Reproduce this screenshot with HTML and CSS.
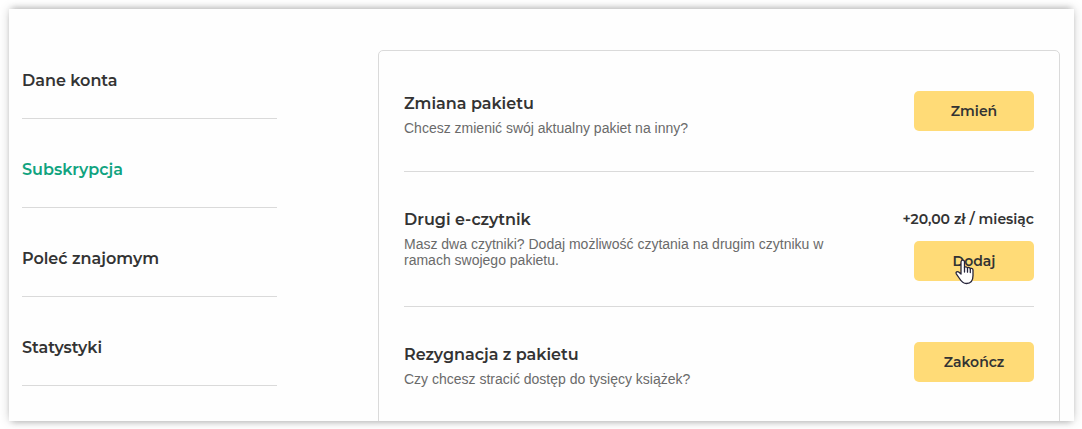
FILE: index.html
```html
<!DOCTYPE html>
<html lang="pl">
<head>
<meta charset="utf-8">
<meta name="viewport" content="width=device-width, initial-scale=1">
<title>Subskrypcja</title>
<link rel="stylesheet" href="styles.css">
</head>
<body class="page">
<div class="sheet">
  <nav class="menu" aria-label="Konto">
    <a class="menu-link" href="#konto">Dane konta</a>
    <a class="menu-link menu-link-active" href="#subskrypcja" aria-current="page">Subskrypcja</a>
    <a class="menu-link" href="#polec">Poleć znajomym</a>
    <a class="menu-link" href="#statystyki">Statystyki</a>
  </nav>
  <main class="panel">
    <section class="row">
      <div class="info">
        <h2 class="title">Zmiana pakietu</h2>
        <p class="text">Chcesz zmienić swój aktualny pakiet na inny?</p>
      </div>
      <div class="action">
        <button class="button" type="button">Zmień</button>
      </div>
    </section>
    <section class="row">
      <div class="info">
        <h2 class="title">Drugi e-czytnik</h2>
        <p class="text">Masz dwa czytniki? Dodaj możliwość czytania na drugim czytniku w ramach swojego pakietu.</p>
      </div>
      <div class="action">
        <p class="price">+20,00 zł / miesiąc</p>
        <button class="button" type="button">Dodaj
          <svg class="cursor" width="20" height="26" viewBox="0 0 20 26" aria-hidden="true">
            <path d="M6 15V3.200C6 .4 9.500 .4 9.500 3.200V8.800C9.500 7.400 12.500 7.500 12.500 9.300C12.500 8 15.300 8.200 15.300 10C15.300 9 18 9.200 18 11V16.500C18 21.500 15.500 24.500 11.500 24.500C8 24.500 6.300 22.500 4.500 19.500L1.300 14.800C.3 12.800 2.500 12 4 13.300Z" fill="#fff" stroke="#26243a" stroke-width="1.300" stroke-linejoin="round"/>
            <path d="M9.500 8.500V13M12.500 9.500V13.200M15.300 10.200V13.500" fill="none" stroke="#26243a" stroke-width="1.300" stroke-linecap="round"/>
          </svg>
        </button>
      </div>
    </section>
    <section class="row">
      <div class="info">
        <h2 class="title">Rezygnacja z pakietu</h2>
        <p class="text">Czy chcesz stracić dostęp do tysięcy książek?</p>
      </div>
      <div class="action">
        <button class="button" type="button">Zakończ</button>
      </div>
    </section>
  </main>
</div>
</body>
</html>
```
FILE: styles.css
```css
* {
  box-sizing: border-box;
}

.page {
  display: flex;
  height: 100vh;
  margin: 0;
  padding: 9px 8px 8px 9px;
  background: #fff;
  color: #333;
  font-family: Montserrat, Inter, "Liberation Sans", sans-serif;
}

.sheet {
  display: flex;
  flex: 1;
  gap: 101px;
  padding: 21px 14px 0 13px;
  overflow: hidden;
  background: #fefefe;
  box-shadow: 0 0 10px rgba(0, 0, 0, 0.18), 0 -4px 6px -3px rgba(0, 0, 0, 0.2), 0 4px 6px -3px rgba(0, 0, 0, 0.2);
}

.menu {
  flex: 0 0 255px;
}

.menu-link {
  display: block;
  padding: 40px 0 26px;
  border-bottom: 1px solid #dadada;
  color: #333;
  font-size: 16px;
  font-weight: 600;
  line-height: 22px;
  text-decoration: none;
}

.menu-link-active {
  color: #10a37f;
}

.panel {
  flex: 1;
  align-self: flex-start;
  margin-top: 20px;
  padding: 5px 25px;
  border: 1px solid #dadada;
  border-radius: 5px;
}

.row {
  display: flex;
  justify-content: space-between;
  gap: 40px;
  min-height: 116px;
  padding: 35px 0 25px;
  border-bottom: 1px solid #dadada;
}

.row:last-child {
  border-bottom: 0;
}

.info {
  max-width: 430px;
}

.title {
  margin: 0 0 3px;
  font-size: 16px;
  font-weight: 600;
  line-height: 26px;
}

.text {
  margin: 0;
  color: #6a6a6a;
  font-family: "Liberation Sans", Arial, sans-serif;
  font-size: 14px;
  line-height: 16px;
}

.action {
  display: flex;
  flex: none;
  flex-direction: column;
  align-items: flex-end;
}

.price {
  margin: 0 0 10px;
  font-size: 14px;
  font-weight: 600;
  line-height: 24px;
}

.button {
  position: relative;
  width: 120px;
  height: 40px;
  padding: 0;
  border: 0;
  border-radius: 5px;
  background: #ffdb77;
  color: #333;
  font-family: inherit;
  font-size: 14px;
  font-weight: 600;
  cursor: pointer;
}

.cursor {
  position: absolute;
  top: 18px;
  left: 41px;
}
```
